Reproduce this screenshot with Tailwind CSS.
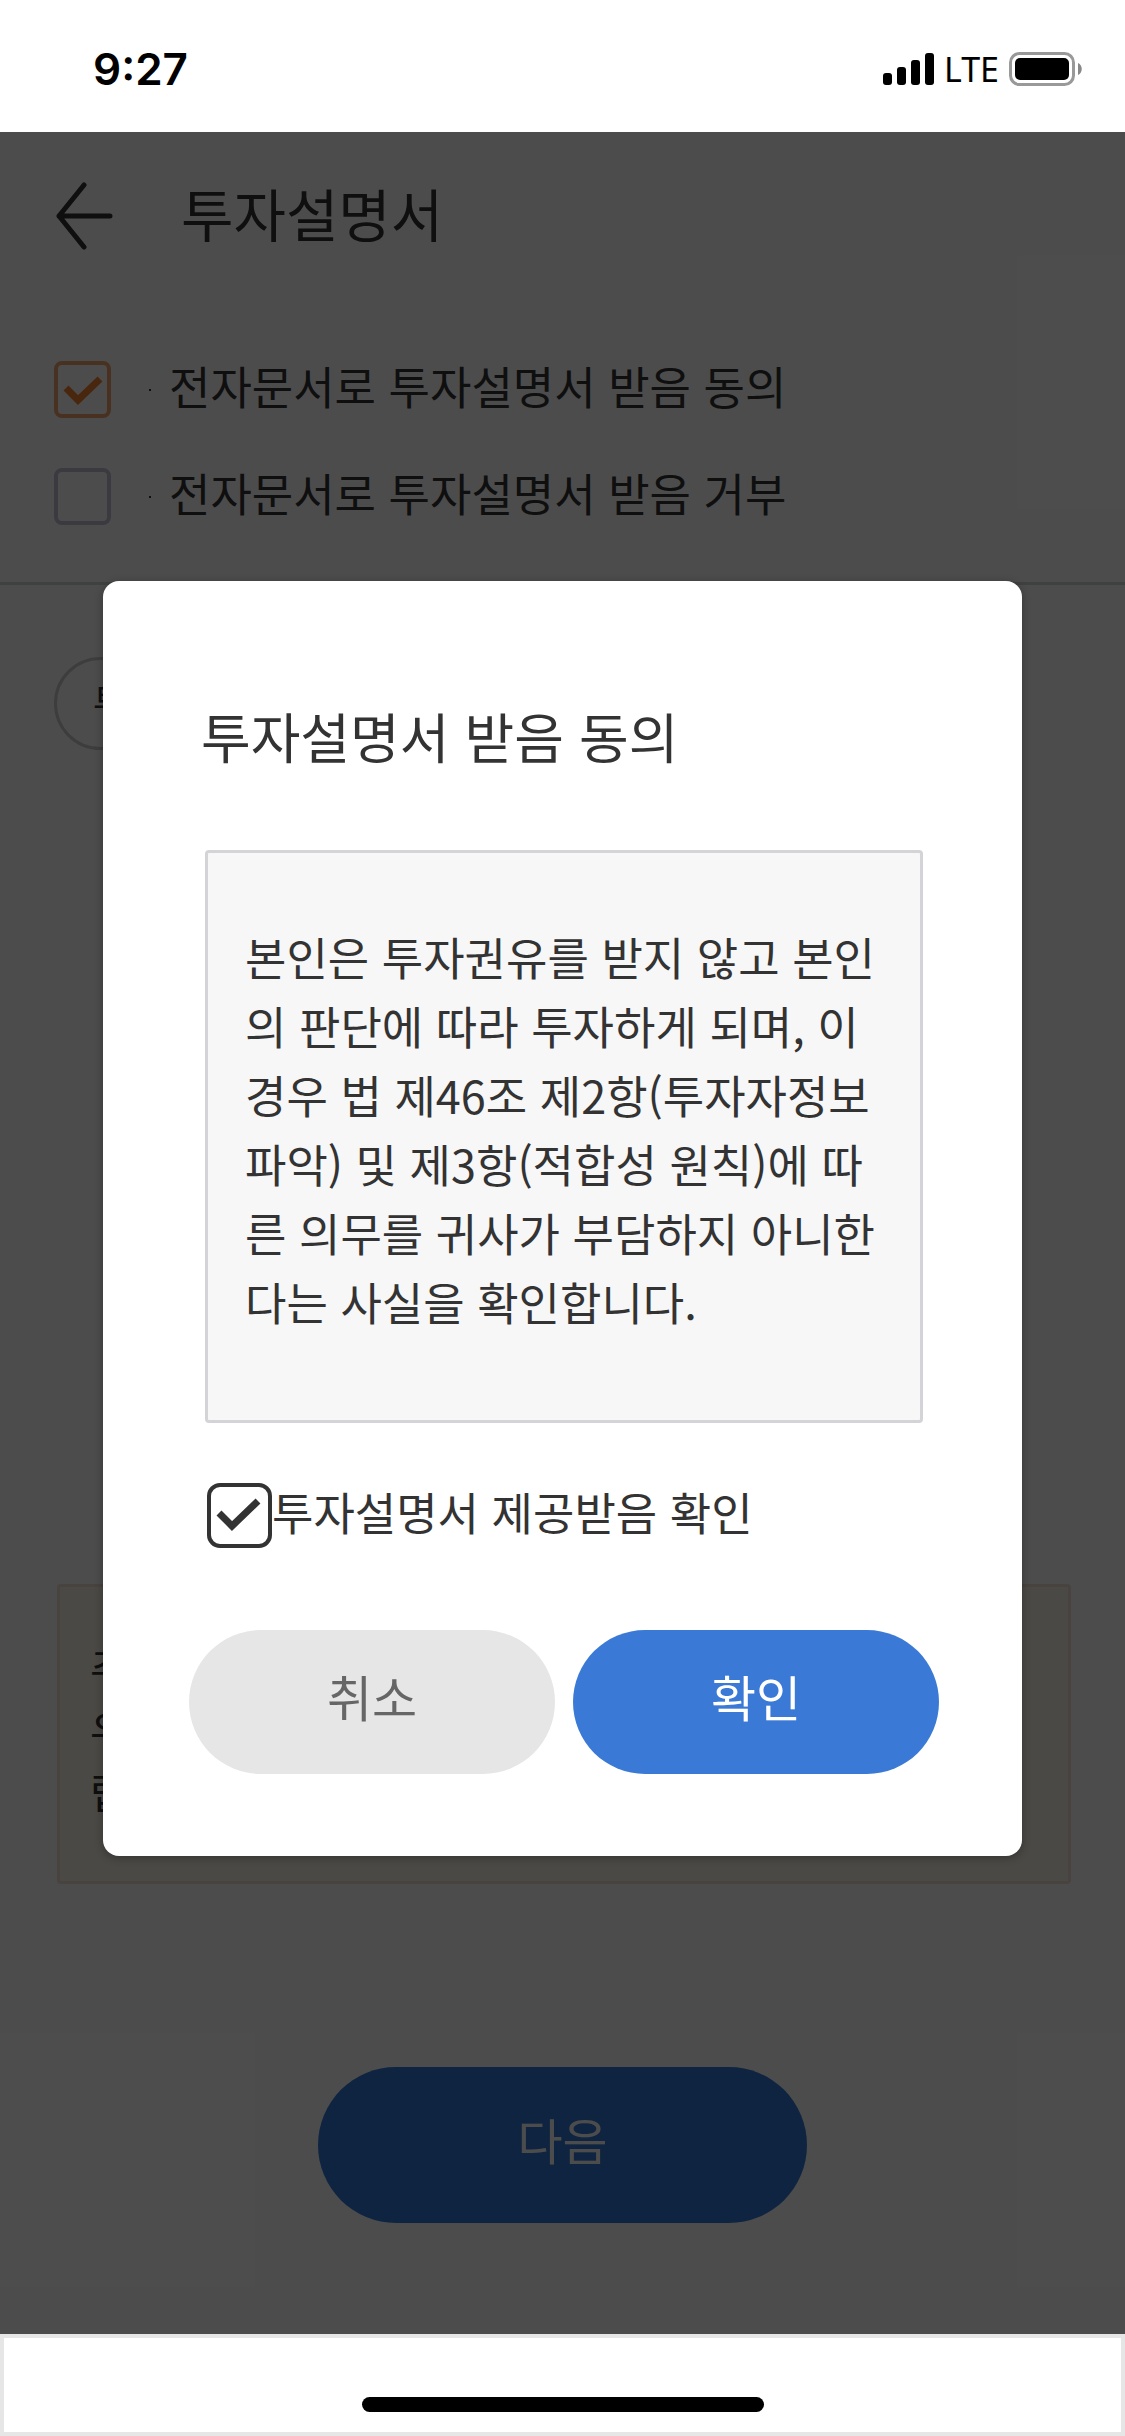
<!DOCTYPE html>
<html lang="ko">
<head>
<meta charset="utf-8">
<meta name="viewport" content="width=device-width, initial-scale=1">
<title>투자설명서</title>
<script src="https://cdn.jsdelivr.net/npm/@tailwindcss/browser@4"></script>
</head>
<body class="bg-white font-['Noto_Sans_CJK_KR',sans-serif] text-[#333]">
<div class="relative flex min-h-screen flex-col">

  <!-- Status bar -->
  <div class="flex h-[132px] items-center justify-between pt-[6px] pr-[43px] pl-[93px] text-black">
    <span class="font-['Inter',sans-serif] text-[44px] leading-none font-semibold">9:27</span>
    <div class="flex items-center gap-[10px]">
      <svg class="h-8 w-[51px]" viewBox="0 0 51 32" fill="currentColor" aria-hidden="true">
        <rect x="0" y="20" width="9" height="12" rx="3"/>
        <rect x="14" y="14" width="9" height="18" rx="3"/>
        <rect x="28" y="7" width="9" height="25" rx="3"/>
        <rect x="42" y="0" width="9" height="32" rx="3"/>
      </svg>
      <span class="font-['Noto_Sans',sans-serif] text-[34px] leading-none">LTE</span>
      <svg class="h-[34px] w-[73px]" viewBox="0 0 73 34" aria-hidden="true">
        <rect x="1.5" y="1.5" width="63" height="31" rx="9" fill="none" stroke="#999" stroke-width="3"/>
        <rect x="6" y="6" width="54" height="22" rx="5"/>
        <path d="M69 11c5 2 5 10 0 12z" fill="#888"/>
      </svg>
    </div>
  </div>

  <!-- Page -->
  <main class="relative flex flex-1 flex-col">
    <header class="flex h-[168px] items-center gap-[68px] pl-[56px]">
      <button type="button" aria-label="뒤로" class="block">
        <svg class="h-[68px] w-[57px]" viewBox="0 0 57 68" fill="none" stroke="currentColor" stroke-width="5" stroke-linecap="round" stroke-linejoin="round" aria-hidden="true"><path d="M28 3 3 34l25 31M3 34h51"/></svg>
      </button>
      <h1 class="pb-2 text-[57px] leading-[80px]">투자설명서</h1>
    </header>

    <div class="flex flex-col gap-[50px] border-b-3 border-[#d2d5d5] pt-[61px] pb-[57px] pl-[54px]">
      <label class="flex h-[57px] items-center">
        <span class="relative flex">
          <input type="checkbox" checked class="peer size-[57px] appearance-none rounded-lg border-4 border-[#c1c4d5] checked:border-[#f2a56f]">
          <svg class="absolute top-0 left-0 hidden size-[57px] peer-checked:block" viewBox="0 0 57 57" fill="none" stroke="#f58030" stroke-width="7" aria-hidden="true"><path d="m12 27 12 12 22-21"/></svg>
        </span>
        <span class="ml-[38px] size-[2px] bg-current"></span>
        <span class="ml-[18px] pb-2 text-[45px] leading-[57px]">전자문서로 투자설명서 받음 동의</span>
      </label>
      <label class="flex h-[57px] items-center">
        <input type="checkbox" class="size-[57px] appearance-none rounded-lg border-4 border-[#c1c4d5]">
        <span class="ml-[38px] size-[2px] bg-current"></span>
        <span class="ml-[18px] pb-2 text-[45px] leading-[57px]">전자문서로 투자설명서 받음 거부</span>
      </label>
    </div>

    <div class="mt-[72px] flex pl-[54px]">
      <button type="button" class="h-[93px] rounded-full border-3 border-[#cdcdcd] px-9 pb-2 text-[36px] leading-[48px]">투자설명서</button>
    </div>

    <p class="mx-[54px] mt-[834px] ml-[57px] h-[300px] rounded border-3 border-[#f5e0d4] bg-[#faf3e9] px-[30px] py-[49px] text-[42px] leading-[62px]">주<br>우<br>랍</p>

    <div class="mt-[183px] mb-[111px] flex justify-center">
      <button type="button" class="h-[156px] w-[489px] rounded-full bg-[#337ad6] pb-3 text-[49px] text-white">다음</button>
    </div>

    <div class="absolute inset-0 bg-black/70"></div>
  </main>

  <!-- Bottom bar -->
  <footer class="flex h-[102px] items-end justify-center border-4 border-[#e6e6e6] pb-5">
    <div class="h-[15px] w-[402px] rounded-full bg-black"></div>
  </footer>

  <!-- Consent dialog -->
  <div class="absolute inset-0 flex items-center px-[103px]">
    <section role="dialog" aria-modal="true" aria-labelledby="dialog-title" class="flex w-full flex-col rounded-2xl bg-white pt-[115px] pr-[83px] pb-[82px] pl-[86px] shadow-[0_2px_8px_rgba(0,0,0,0.3)]">
      <h2 id="dialog-title" class="px-3 text-[54px] leading-[80px]">투자설명서 받음 동의</h2>
      <p class="mx-4 mt-[74px] rounded border-3 border-[#d3d3d8] bg-[#f7f7f7] px-[37px] pt-[69px] pb-[84px] text-[45px] leading-[69px] whitespace-nowrap">본인은 투자권유를 받지 않고 본인<br>의 판단에 따라 투자하게 되며, 이<br>경우 법 제46조 제2항(투자자정보<br>파악) 및 제3항(적합성 원칙)에 따<br>른 의무를 귀사가 부담하지 아니한<br>다는 사실을 확인합니다.</p>
      <label class="mt-[60px] flex h-[65px] items-center pl-[18px]">
        <span class="relative flex">
          <input type="checkbox" checked class="peer size-[65px] appearance-none rounded-[13px] border-4 border-[#333]">
          <svg class="absolute top-0 left-0 hidden size-[65px] peer-checked:block" viewBox="0 0 65 65" fill="none" stroke="#333" stroke-width="7" aria-hidden="true"><path d="m12 30 13 13 26-25"/></svg>
        </span>
        <span class="pb-2 text-[45px] leading-[65px]">투자설명서 제공받음 확인</span>
      </label>
      <div class="mt-[82px] grid grid-cols-2 gap-[18px]">
        <button type="button" class="h-36 rounded-full bg-[#e6e6e6] pb-3 text-[49px] text-[#666]">취소</button>
        <button type="button" class="h-36 rounded-full bg-[#3a7ad6] pb-3 text-[49px] text-white">확인</button>
      </div>
    </section>
  </div>
</div>
</body>
</html>
